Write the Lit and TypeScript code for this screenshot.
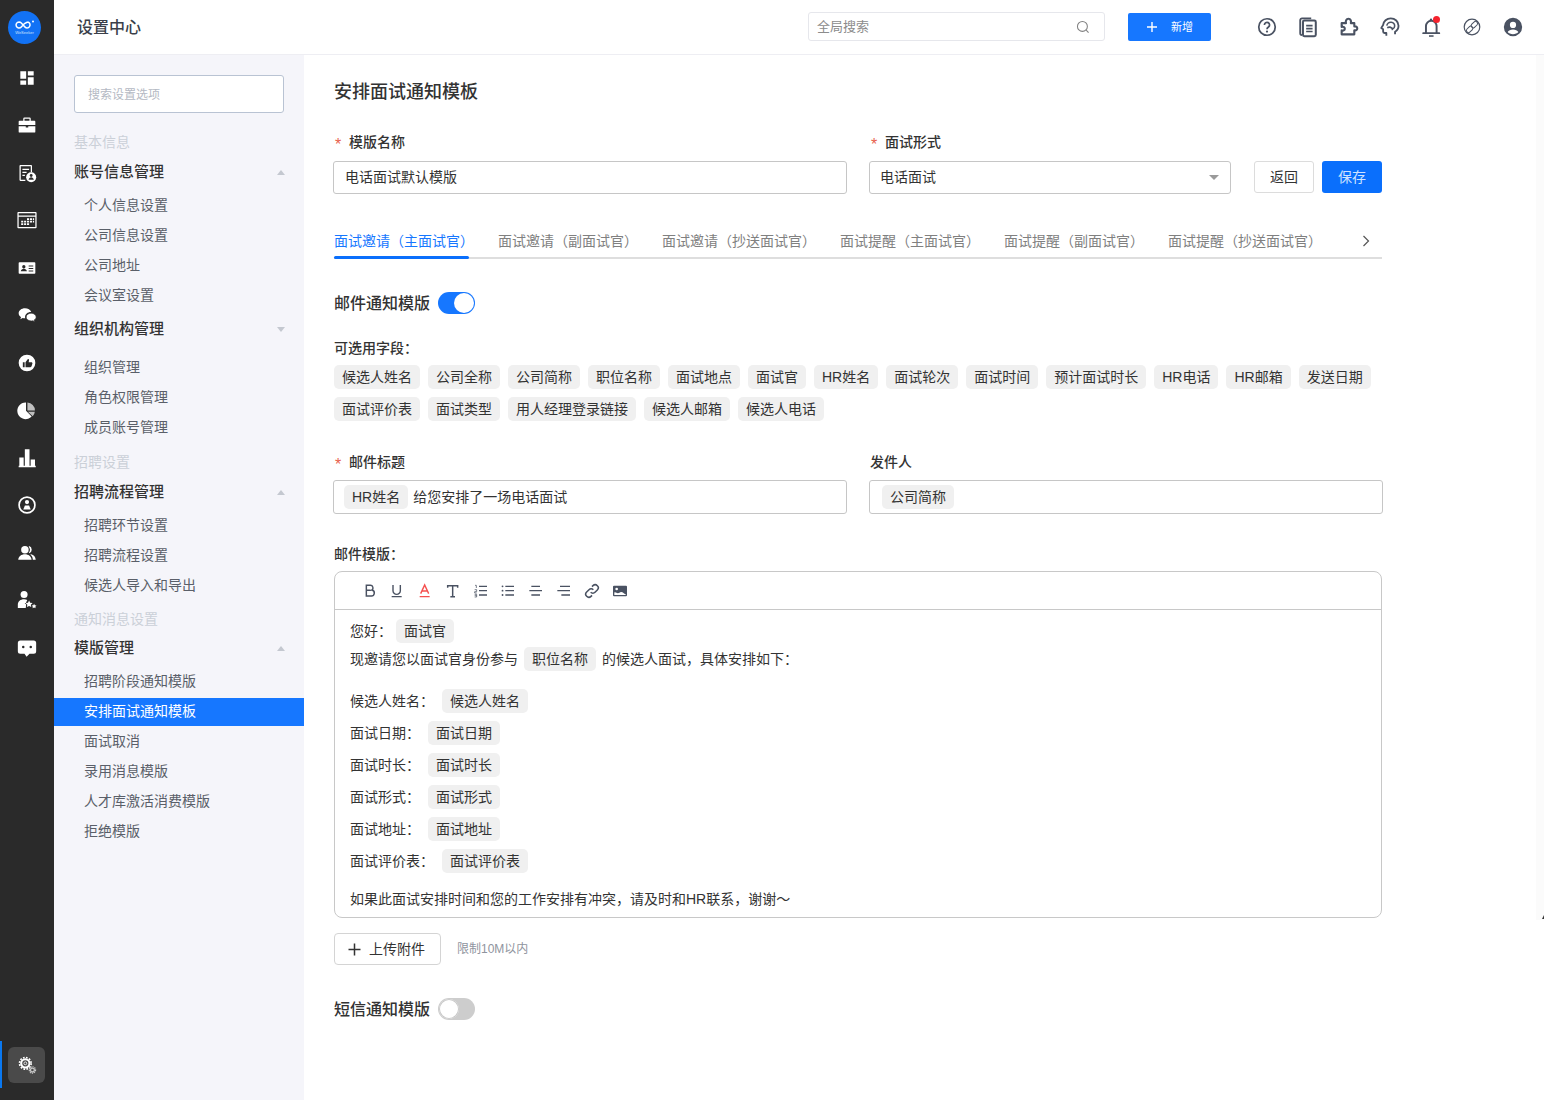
import { LitElement, html, css, svg } from "lit";
import { customElement } from "lit/decorators.js";

const railIcons = [
  svg`<path d="M4 4h7v9H4zM13 4h7v5h-7zM13 11h7v9h-7zM4 15h7v5H4z"/>`,
  svg`<path d="M9 3h6a1.500 1.500 0 0 1 1.500 1.500V7H21a1 1 0 0 1 1 1v4H2V8a1 1 0 0 1 1-1h4.500V4.500A1.500 1.500 0 0 1 9 3zm0 1.600V7h6V4.600zM2 13.500h8.500V15h3v-1.500H22V20a1 1 0 0 1-1 1H3a1 1 0 0 1-1-1z"/>`,
  svg`<path fill-rule="evenodd" d="M4 2.500h13a1 1 0 0 1 1 1V11h-1.500V4h-12v16H10v1.500H4a1 1 0 0 1-1-1v-17a1 1 0 0 1 1-1zM6.500 7h8v1.500h-8zM6.500 10.500h5V12h-5zM6.500 14h3v1.500h-3z"/><circle cx="17" cy="17" r="6"/><circle cx="17" cy="15" r="1.700" fill="#2a2a2a"/><path d="M13.800 20c.4-2 1.700-3 3.200-3s2.800 1 3.200 3z" fill="#2a2a2a"/>`,
  svg`<path fill-rule="evenodd" d="M1.500 2.500h21a1 1 0 0 1 1 1v17.500a1 1 0 0 1-1 1h-21a1 1 0 0 1-1-1V3.500a1 1 0 0 1 1-1zm.500 1.500v2.500h20V4zm0 4v12.500h20V8z"/><path d="M12 10h2.500v2H12zM15.500 10H18v2h-2.500zM19 10h1.500v2H19zM5 13h2.500v2H5zM8.500 13H11v2H8.500zM12 13h2.500v2H12zM15.500 13H18v2h-2.500zM19 13h1.500v2H19zM5 16h2.500v2H5zM8.500 16H11v2H8.500zM12 16h2.500v2H12z"/>`,
  svg`<path fill-rule="evenodd" d="M3 5h18a1 1 0 0 1 1 1v12a1 1 0 0 1-1 1H3a1 1 0 0 1-1-1V6a1 1 0 0 1 1-1zm5.200 3.500a2 2 0 1 0 0 4 2 2 0 0 0 0-4zM4.500 16h7.400c-.3-1.800-1.900-3-3.700-3s-3.400 1.200-3.700 3zM14 9v1.300h5.500V9zm0 3v1.300h5.500V12zm0 3v1.300h5.500V15z"/>`,
  svg`<path d="M9.500 4C5.400 4 2 6.700 2 10c0 1.900 1.100 3.500 2.800 4.600L4 17l2.800-1.400c.9.300 1.800.4 2.700.4h.4a5.500 5.500 0 0 1-.2-1.500c0-3.300 3.100-6 7-6h.4C16.200 5.800 13.100 4 9.500 4z"/><path d="M17 9.800c-3.300 0-6 2.100-6 4.700s2.700 4.700 6 4.700c.7 0 1.400-.1 2-.3l2.200 1.100-.6-1.900c1.500-.9 2.400-2.200 2.400-3.600 0-2.600-2.700-4.700-6-4.700z" stroke="#2a2a2a" stroke-width=".8"/>`,
  svg`<path fill-rule="evenodd" d="M12 2a10 10 0 1 1 0 20 10 10 0 0 1 0-20zM7 11v6h2.200v-6zm3.200 0v6h5.900c.7 0 1.200-.4 1.400-1l1-3.400c.2-.8-.4-1.600-1.300-1.600h-3.200l.4-2.200c.1-.8-.5-1.500-1.300-1.500z"/>`,
  svg`<path d="M10.800 3v10l6.800 6.900A10 10 0 1 1 10.800 3z"/><path d="M12.500 3a9.500 9.500 0 0 1 9 9.500h-9zM13 14.200h8.400a10 10 0 0 1-2.500 5.400z" opacity=".7"/>`,
  svg`<path d="M2 21.200h20.500V23H2zM2.800 11.400h5.200v9.800H2.800zM9.400 1.500h5.600v19.700H9.400zM16.400 13.800h5.200v7.400h-5.200z"/>`,
  svg`<path fill-rule="evenodd" d="M12 1.500a10.500 10.500 0 1 1 0 21 10.500 10.500 0 0 1 0-21zm0 2a8.500 8.500 0 1 0 0 17 8.500 8.500 0 0 0 0-17z"/><circle cx="12" cy="8.500" r="2.500"/><path d="M7.500 17.500l2-5h5l2 5z"/>`,
  svg`<circle cx="9.500" cy="8" r="4.500"/><path d="M1.500 20c.3-4 3.700-6.500 8-6.500s7.700 2.500 8 6.500zM14.500 3.700a4.500 4.500 0 0 1 0 8.600c-.5-.2-.5-.7-.2-1a5.500 5.500 0 0 0 0-6.600c-.3-.4-.3-.8.200-1zM17 13.500c3 .6 5.200 3 5.500 6.500H19c-.2-2.500-1-4.500-2.800-5.800-.3-.3 0-.8.800-.7z"/>`,
  svg`<circle cx="8.500" cy="5.500" r="4.200"/><path d="M1 21.500v-4c0-4 3-6.500 7.500-6.500 1.500 0 2.800.3 3.800.9l-1.600 3.600-1.500.2 1.800 1.700-.5 4.100z"/><path d="M14.500 12.500l1.300 2.700 2.900.4-2.100 2 .5 2.900-2.600-1.400-2.600 1.400.5-2.900-2.100-2 2.900-.4zM20.500 16.500l.9 1.800 2 .3-1.400 1.400.3 2-1.800-.9-1.800.9.3-2-1.400-1.400 2-.3z"/>`,
  svg`<path fill-rule="evenodd" d="M4 3h16a3 3 0 0 1 3 3v10a3 3 0 0 1-3 3h-5l-3.500 3.500L9 19H4a3 3 0 0 1-3-3V6a3 3 0 0 1 3-3zm3.500 6.200a1.500 1.500 0 1 0 0 3 1.500 1.500 0 0 0 0-3zm9 0a1.500 1.500 0 1 0 0 3 1.500 1.500 0 0 0 0-3z"/>`,
];

const topIcons = [
  svg`<circle cx="12" cy="12" r="9" fill="none" stroke-width="1.900"/><path d="M9.200 9.700a2.800 2.800 0 1 1 4.400 2.300c-1 .7-1.600 1.200-1.600 2.400" fill="none" stroke-width="1.900"/><circle cx="12" cy="17" r="1.200" stroke="none" fill="#4a5262"/>`,
  svg`<path d="M5.500 20.800a2 2 0 0 1-2-2V4.500a2 2 0 0 1 2-2h10" fill="none" stroke-width="2"/><rect x="6.500" y="5" width="14" height="17" rx="1.500" fill="none" stroke-width="2.200"/><path d="M10 10.500h7M10 13.800h7M10 17h7" fill="none" stroke-width="1.700"/>`,
  svg`<path d="M5 21v-4.300c2.300.7 3.400-.6 3.400-1.900S7.300 12.300 5 13V8.800h4.700C9 6.600 10 4 12.400 4s3.300 2.600 2.600 4.800h3.800v3.700c2.200-.6 3.200.7 3.200 2s-1 2.700-3.200 2V21z" transform="translate(-1 -1)" fill="none" stroke-width="2.300" stroke-linejoin="round"/>`,
  svg`<path d="M8 21.500v-3H6a1.500 1.500 0 0 1-1.500-1.500v-2.500L2.500 13l2-3.200C5 5.800 8.300 2.500 12.800 2.500c4.700 0 8.500 3.600 8.500 8.200 0 3-1.600 5.300-3.800 6.500v2.800" fill="none" stroke-width="2" stroke-linejoin="round"/><path d="M8.500 10.500c.3-2.400 2.500-4 4.800-3.700 2.300.3 3.800 2.100 3.800 4.200 0 1.700-1 3-2.500 3.600l-.9-2.300M9 12.800c1.800-1 3.700-.7 5 .6" fill="none" stroke-width="1.700"/>`,
  svg`<path d="M6.500 18V11a5.800 5.800 0 0 1 11.600 0v7M3.500 18.700h17.500" fill="none" stroke-width="2.100" stroke-linecap="round"/><path d="M9.800 21h5v1.700h-5z" stroke="none" fill="#4a5262"/><circle cx="12" cy="4" r="1.300" stroke="none" fill="#4a5262"/>`,
  svg`<circle cx="12" cy="12" r="8.500" fill="none" stroke-width="1.300"/><rect x="12.300" y="5.400" width="4.600" height="8" rx="2.300" transform="rotate(45 14.600 9.400)" fill="none" stroke-width="1.100"/><rect x="7.100" y="10.600" width="4.600" height="8" rx="2.300" transform="rotate(45 9.400 14.600)" fill="none" stroke-width="1.100"/>`,
  svg`<path stroke="none" fill="#4a5262" fill-rule="evenodd" d="M12 2a10 10 0 1 1 0 20 10 10 0 0 1 0-20zm0 4.300a3.400 3.400 0 1 0 0 6.800 3.400 3.400 0 0 0 0-6.800zM6.200 17.500c1.200 1.500 3.400 2.400 5.800 2.400s4.600-.9 5.800-2.400c-.9-1.800-3.200-2.900-5.800-2.900s-4.900 1.100-5.800 2.900z"/>`,
];

const tc = "#4a5262";
const toolIcons = [
  svg`<path d="M6.500 3.500h6a3.900 3.900 0 0 1 2.300 7.100A4.300 4.300 0 0 1 13 19.500H6.500zM6.500 11h6.500" fill="none" stroke=${tc} stroke-width="2.200"/>`,
  svg`<path d="M6 3v8.500a5.500 5.500 0 0 0 11 0V3M4 20.500h15" fill="none" stroke=${tc} stroke-width="2.100"/>`,
  svg`<path d="M5.500 16L11.500 3l6 13M7.500 12h8M4 20.500h15" fill="none" stroke="#f5504f" stroke-width="2.100"/>`,
  svg`<path d="M4 7V4h15v3M11.500 4v16.500M8 20.500h7" fill="none" stroke=${tc} stroke-width="2.200"/>`,
  svg`<path d="M9 5h12M9 11.500h12M9 18h12" fill="none" stroke=${tc} stroke-width="2.100"/><path d="M3 3.500h2v4M2.500 10h3v3h-3v2h3M2.500 17h3v4h-3M2.500 19h3" fill="none" stroke=${tc} stroke-width="1.100"/>`,
  svg`<path d="M8 5h13M8 11.500h13M8 18h13" fill="none" stroke=${tc} stroke-width="2.100"/><circle cx="3.800" cy="5" r="1.400" fill=${tc}/><circle cx="3.800" cy="11.500" r="1.400" fill=${tc}/><circle cx="3.800" cy="18" r="1.400" fill=${tc}/>`,
  svg`<path d="M5 5h13M2 11.500h19M5 18h13" fill="none" stroke=${tc} stroke-width="2.100"/>`,
  svg`<path d="M6 5h15M2 11.500h19M8 18h13" fill="none" stroke=${tc} stroke-width="2.100"/>`,
  svg`<path d="M10 14a4.500 4.500 0 0 0 6.500 0l3.500-3.500a4.500 4.500 0 0 0-6.500-6.500l-1.500 1.500M14 10a4.500 4.500 0 0 0-6.500 0L4 13.500A4.500 4.500 0 0 0 10.500 20l1.500-1.500" fill="none" stroke=${tc} stroke-width="2.300"/>`,
  svg`<path fill=${tc} fill-rule="evenodd" d="M3 4h18a1.500 1.500 0 0 1 1.500 1.500v13A1.500 1.500 0 0 1 21 20H3a1.500 1.500 0 0 1-1.500-1.500v-13A1.500 1.500 0 0 1 3 4zm.5 10.200V18h17v-1c-2.500-1-4-3.500-6.700-3.500-2.300 0-3 2-5 2-2.200 0-3-2.300-5.300-1.300zM7 7a2 2 0 1 0 0 4 2 2 0 0 0 0-4z"/>`,
];

const tags1 = ["候选人姓名","公司全称","公司简称","职位名称","面试地点","面试官","HR姓名","面试轮次","面试时间","预计面试时长","HR电话","HR邮箱","发送日期","面试评价表","面试类型","用人经理登录链接","候选人邮箱","候选人电话"];
const tabs = ["面试邀请（主面试官）","面试邀请（副面试官）","面试邀请（抄送面试官）","面试提醒（主面试官）","面试提醒（副面试官）","面试提醒（抄送面试官）"];
const details = [["候选人姓名：","候选人姓名"],["面试日期：","面试日期"],["面试时长：","面试时长"],["面试形式：","面试形式"],["面试地址：","面试地址"],["面试评价表：","面试评价表"]];

@customElement("app-root")
export class AppRoot extends LitElement {
  static styles = css`
    :host { display: block; width: 1544px; height: 1100px; overflow: hidden; position: relative; background: #fff;
      font-family: "Liberation Sans", "Noto Sans CJK SC", sans-serif; font-size: 14px; line-height: 20px; color: #333; }
    * { box-sizing: border-box; }
    .app { display: flex; height: 1100px; }
    .rail { width: 54px; flex: none; background: #2a2a2a; display: flex; flex-direction: column; align-items: stretch; padding-top: 11px; position: relative; }
    .logo { margin-left: 8px; width: 33px; height: 33px; border-radius: 50%; background: #1272f5; display: flex; flex-direction: column; align-items: center; justify-content: center; margin-bottom: 10px; }
    .logo span { font-size: 4px; line-height: 5px; color: #cfe3ff; }
    .rail-item { height: 47.500px; display: flex; align-items: center; justify-content: center; }
    .rail-item svg { width: 20px; height: 20px; fill: #fff; }
    .settings { margin: auto 0 17px 8px; width: 37px; height: 36px; border-radius: 6px; background: #4a4a4a; display: flex; align-items: center; justify-content: center; }
    .settings svg { width: 20px; height: 20px; }
    .marker { position: absolute; left: 0; top: 1041px; width: 2px; height: 47px; background: #0a78f0; }
    .right { flex: 1; min-width: 0; display: flex; flex-direction: column; }
    header { height: 55px; flex: none; display: flex; align-items: center; border-bottom: 1px solid #eeeef3; padding-left: 23px; }
    header h1 { margin: 0; padding-top: 2px; font-size: 16px; font-weight: 500; color: #3a3f4a; width: 731px; }
    .gsearch { width: 297px; height: 29px; border: 1px solid #e6e7ec; border-radius: 3px; display: flex; align-items: center; justify-content: space-between; padding: 0 14px 0 8px; font-size: 13px; color: #8c8c8c; margin-top: -1px; }
    .gsearch svg { width: 14px; height: 14px; }
    .add { margin-left: 23px; margin-top: -1px; width: 83px; height: 28px; background: #1677ff; border-radius: 2px; color: #fff; display: flex; align-items: center; padding-left: 17px; font-size: 11px; }
    .add svg { width: 14px; height: 14px; margin-right: 12px; }
    .top-icons { margin-left: 45px; margin-top: -1px; display: flex; gap: 19px; }
    .top-icons div { position: relative; width: 22px; height: 22px; }
    .top-icons svg { width: 22px; height: 22px; stroke: #4a5262; display: block; }
    .dot { position: absolute; left: 13px; top: 0; width: 7px; height: 7px; border-radius: 50%; background: #f5222d; }
    .body { flex: 1; display: flex; min-height: 0; }
    aside { width: 250px; flex: none; background: #f5f5fa; padding-top: 20px; }
    .side-search { margin-left: 20px; width: 210px; height: 38px; border: 1px solid #b9c3d3; border-radius: 3px; background: #fff; font-size: 12px; color: #b4b9c3; display: flex; align-items: center; padding: 2px 0 0 13px; margin-bottom: 14px; }
    .cat { height: 30px; line-height: 30px; padding-left: 20px; color: #cbd0d8; font-size: 14px; }
    .cat.a { margin-top: 5px; }
    .cat.b { margin-top: 4px; height: 29px; }
    .head { height: 30px; padding: 0 19px 0 20px; display: flex; align-items: center; justify-content: space-between; font-size: 15px; font-weight: 500; color: #333; }
    .head.second { margin-top: 4px; }
    .caret { width: 0; height: 0; border-left: 4.500px solid transparent; border-right: 4.500px solid transparent; }
    .caret.up { border-bottom: 5px solid #c4c8d0; }
    .caret.down { border-top: 5px solid #c4c8d0; }
    .subs { margin-top: 3px; }
    .subs.wide { margin-top: 8px; }
    .sub { height: 30px; line-height: 30px; padding-left: 30px; color: #5a5f69; font-size: 14px; }
    .sub.on { height: 28px; line-height: 26px; margin: 2px 0 0; background: #1677ff; color: #fff; }
    main { flex: 1; min-width: 0; padding: 20px 0 0 30px; }
    h2 { margin: 0 0 26px; font-size: 18px; line-height: 34px; font-weight: 500; color: #333; height: 32px; }
    .row { display: flex; width: 1049px; }
    .col1 { width: 514px; margin-left: -1px; flex: none; }
    .col1 .flabel { padding-left: 1px; }
    .col2 { margin-left: 22px; flex: none; }
    .col2 .flabel { padding-left: 1px; }
    .flabel { height: 18px; line-height: 18px; font-size: 14px; font-weight: 500; color: #333; display: flex; margin-bottom: 10px; }
    .flabel i { font-style: normal; font-size: 16px; color: #e8604c; width: 15px; padding: 3px 0 0 1px; font-weight: 400; }
    .input { height: 33px; border: 1px solid #c6c6c6; border-radius: 3px; display: flex; align-items: center; padding: 0 11px 1px; color: #333; background: #fff; }
    .select { width: 362px; justify-content: space-between; padding-right: 11px; padding-left: 10px; }
    .select b { width: 0; height: 0; border-left: 5px solid transparent; border-right: 5px solid transparent; border-top: 5px solid #9a9a9a; }
    .acts { display: flex; gap: 8px; margin-left: 23px; padding-top: 28px; }
    .btn { width: 60px; height: 32px; border-radius: 3px; display: flex; align-items: center; justify-content: center; }
    .ghost { border: 1px solid #dcdcdc; color: #333; }
    .primary { background: #0a6ffc; color: #cfe3ff; }
    .tabs { width: 1048px; height: 34px; margin-top: 31px; border-bottom: 2px solid #dedede; display: flex; gap: 24px; position: relative; }
    .tab { color: #808080; line-height: 32px; height: 32px; white-space: nowrap; }
    .tab.on { color: #1677ff; width: 140px; }
    .ink { position: absolute; left: 0; bottom: -2px; width: 135px; height: 3px; border-radius: 2px; background: #0a6ffc; }
    .chev { position: absolute; left: 1027px; top: 10px; width: 10px; height: 12px; }
    .swrow { display: flex; align-items: center; gap: 8px; font-size: 16px; font-weight: 500; color: #333; height: 22px; }
    .swrow span { padding-top: 2px; }
    .swrow.mail { margin-top: 33px; }
    .swrow.sms { margin-top: 33px; }
    .sw { width: 37px; height: 22px; border-radius: 11px; background: #1677ff; position: relative; }
    .sw::after { content: ""; position: absolute; right: 1px; top: 1px; width: 20px; height: 20px; border-radius: 50%; background: #fff; }
    .sw.off { background: #cdcdcd; }
    .sw.off::after { right: auto; left: 1px; box-shadow: 0 0 0 1px #c9c9c9 inset; }
    .sl { font-weight: 500; color: #333; height: 20px; line-height: 20px; margin-top: 24px; }
    .sl.mt { margin-top: 30px; }
    .tags { display: flex; flex-wrap: wrap; gap: 8px; margin-top: 7px; width: 1048px; }
    .chip { display: inline-flex; align-items: center; height: 24px; padding: 0 8px; background: #f0f0f0; border-radius: 5px; color: #333; white-space: nowrap; }
    .row.mail-row { margin-top: 32px; }
    .mail-row .flabel { margin-bottom: 9px; }
    .input.big { height: 34px; padding: 0 10px; border-color: #c6c6c6; }
    .input.big .chip { margin-right: 5px; }
    .input.big.sender { width: 514px; padding-left: 12px; }
    .editor { width: 1048px; height: 347px; margin-top: 7px; border: 1px solid #c8c8c8; border-radius: 8px; }
    .toolbar { height: 38px; border-bottom: 1px solid #c8c8c8; display: flex; align-items: center; gap: 11.800px; padding-left: 26.500px; }
    .toolbar svg { width: 16px; height: 16px; flex: none; }
    .content { padding: 7px 15px 0; }
    .line { height: 28px; display: flex; align-items: center; color: #333; white-space: pre; }
    .line.d { height: 32px; }
    .line .chip { margin: 0 6px; }
    .line.d .chip { margin: 0 8px; }
    .line.hello .chip { margin: 0 4px; }
    .gap1 { margin-top: 12px; }
    .gap2 { margin-top: 8px; }
    .upload { display: flex; align-items: center; margin-top: 15px; }
    .upbtn { width: 107px; height: 32px; border: 1px solid #d4d4d4; border-radius: 4px; display: flex; align-items: center; padding-left: 12px; gap: 7px; color: #333; }
    .upbtn svg { width: 15px; height: 15px; }
    .limit { margin-left: 16px; font-size: 12px; color: #8f949e; }
    .strip { position: absolute; left: 1536px; top: 54px; width: 8px; height: 866px; background: #fbfbfb; border-top: 1px solid #eeeef3; }
    .strip-end { position: absolute; left: 1542px; top: 915px; width: 0; height: 0; border-bottom: 4px solid #333; border-left: 2px solid transparent; }
  `;

  render() {
    const group = (items: string[], on = "", wide = false) => html`<div class="subs ${wide ? "wide" : ""}">${items.map(t => html`<div class="sub ${t === on ? "on" : ""}">${t}</div>`)}</div>`;
    return html`<div class="app">
      <nav class="rail">
        <div class="logo">
          <svg width="21" height="10" viewBox="0 0 21 10"><path d="M5 2a3 3 0 1 0 2.300 5l3.200-3.500 3.200-1.500M5 2c1 0 1.800.5 2.300 1l3.200 3.500A3 3 0 1 0 13.700 2" fill="none" stroke="#fff" stroke-width="1.500"/><circle cx="19" cy="1.500" r="1" fill="#fff"/></svg>
          <span>WeSeeker</span>
        </div>
        ${railIcons.map(i => html`<div class="rail-item"><svg viewBox="0 0 24 24">${i}</svg></div>`)}
        <div class="settings"><svg viewBox="0 0 24 24" fill="none" stroke="#fff"><circle cx="10" cy="10" r="5" stroke-width="2.500"/><circle cx="10" cy="10" r="7" stroke-width="2" stroke-dasharray="2 1.660"/><circle cx="10" cy="10" r="1.700" stroke-width="1"/><circle cx="18.500" cy="18" r="2.300" stroke-width="1.500" stroke="#c8c8c8"/><circle cx="18.500" cy="18" r="3.800" stroke-width="1.400" stroke="#c8c8c8" stroke-dasharray="1.500 1"/></svg></div>
        <div class="marker"></div>
      </nav>
      <div class="right">
        <header>
          <h1>设置中心</h1>
          <div class="gsearch">全局搜索<svg viewBox="0 0 24 24" fill="none" stroke="#808080" stroke-width="1.800"><circle cx="11" cy="11" r="8.500"/><path d="M17.500 17.500l4 4"/></svg></div>
          <div class="add"><svg viewBox="0 0 14 14" fill="none" stroke="#fff" stroke-width="1.400"><path d="M7 2v10M2 7h10"/></svg>新增</div>
          <div class="top-icons">${topIcons.map((i, n) => html`<div><svg viewBox="0 0 24 24">${i}</svg>${n === 4 ? html`<span class="dot"></span>` : ""}</div>`)}</div>
        </header>
        <div class="body">
          <aside>
            <div class="side-search">搜索设置选项</div>
            <div class="cat">基本信息</div>
            <div class="head">账号信息管理<span class="caret up"></span></div>
            ${group(["个人信息设置","公司信息设置","公司地址","会议室设置"])}
            <div class="head second">组织机构管理<span class="caret down"></span></div>
            ${group(["组织管理","角色权限管理","成员账号管理"], "", true)}
            <div class="cat a">招聘设置</div>
            <div class="head">招聘流程管理<span class="caret up"></span></div>
            ${group(["招聘环节设置","招聘流程设置","候选人导入和导出"])}
            <div class="cat b">通知消息设置</div>
            <div class="head">模版管理<span class="caret up"></span></div>
            ${group(["招聘阶段通知模版","安排面试通知模板","面试取消","录用消息模版","人才库激活消费模版","拒绝模版"], "安排面试通知模板")}
          </aside>
          <main>
            <h2>安排面试通知模板</h2>
            <div class="row">
              <div class="col1"><div class="flabel"><i>*</i>模版名称</div><div class="input">电话面试默认模版</div></div>
              <div class="col2"><div class="flabel"><i>*</i>面试形式</div><div class="input select">电话面试<b></b></div></div>
              <div class="acts"><div class="btn ghost">返回</div><div class="btn primary">保存</div></div>
            </div>
            <div class="tabs">
              ${tabs.map((t, i) => html`<div class="tab ${i === 0 ? "on" : ""}">${t}</div>`)}
              <div class="ink"></div>
              <svg class="chev" viewBox="0 0 10 12" fill="none" stroke="#555" stroke-width="1.200"><path d="M2.500 1l5 5-5 5"/></svg>
            </div>
            <div class="swrow mail"><span>邮件通知模版</span><div class="sw"></div></div>
            <div class="sl">可选用字段：</div>
            <div class="tags">${tags1.map(t => html`<span class="chip">${t}</span>`)}</div>
            <div class="row mail-row">
              <div class="col1"><div class="flabel"><i>*</i>邮件标题</div><div class="input big"><span class="chip">HR姓名</span>给您安排了一场电话面试</div></div>
              <div class="col2"><div class="flabel">发件人</div><div class="input big sender"><span class="chip">公司简称</span></div></div>
            </div>
            <div class="sl mt">邮件模版：</div>
            <div class="editor">
              <div class="toolbar">${toolIcons.map(i => html`<svg viewBox="0 0 24 24">${i}</svg>`)}</div>
              <div class="content">
                <div class="line hello">您好：<span class="chip">面试官</span></div>
                <div class="line">现邀请您以面试官身份参与<span class="chip">职位名称</span>的候选人面试，具体安排如下：</div>
                <div class="gap1"></div>
                ${details.map(([a, b]) => html`<div class="line d">${a}<span class="chip">${b}</span></div>`)}
                <div class="gap2"></div>
                <div class="line">如果此面试安排时间和您的工作安排有冲突，请及时和HR联系，谢谢～</div>
              </div>
            </div>
            <div class="upload">
              <div class="upbtn"><svg viewBox="0 0 15 15" fill="none" stroke="#333" stroke-width="1.500"><path d="M7.500 1.500v12M1.500 7.500h12"/></svg>上传附件</div>
              <div class="limit">限制10M以内</div>
            </div>
            <div class="swrow sms"><span>短信通知模版</span><div class="sw off"></div></div>
          </main>
        </div>
      </div>
    </div>
    <div class="strip"></div><div class="strip-end"></div>`;
  }
}
